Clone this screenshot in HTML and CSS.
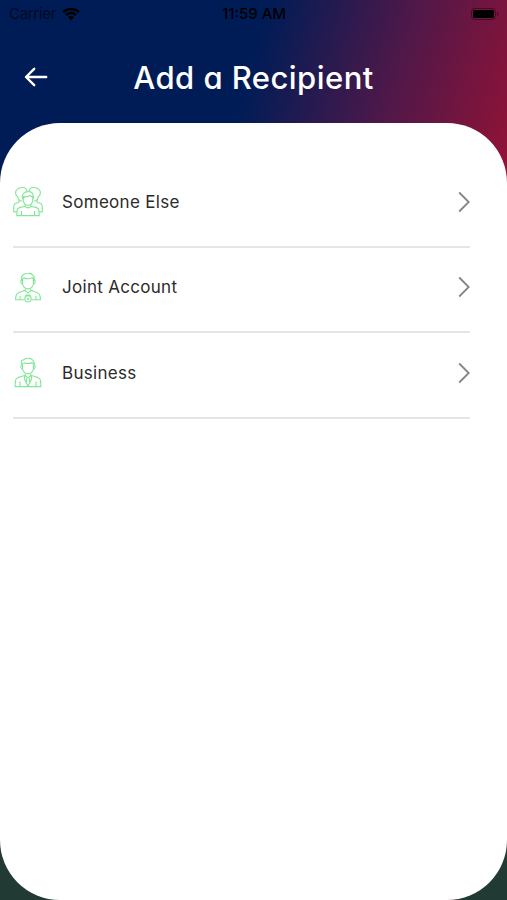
FILE: index.html
```html
<!DOCTYPE html>
<html lang="en">
<head>
  <meta charset="UTF-8">
  <meta name="viewport" content="width=device-width, initial-scale=1">
  <title>Add a Recipient</title>
  <link rel="stylesheet" href="styles.css">
</head>
<body>

<div class="screen">

  <!-- Status bar -->
  <div class="status-bar">
    <div class="status-left">
      <span class="carrier">Carrier</span>
      <svg class="wifi" viewBox="0 0 18 14" width="18" height="14">
        <path d="M1 5.2a11.5 11.5 0 0 1 16 0M3.9 8.1a7.4 7.4 0 0 1 10.2 0" fill="none" stroke="#000" stroke-width="2.5"/>
        <path d="M9 13.4L5.9 10.2a4.5 4.5 0 0 1 6.2 0z"/>
      </svg>
    </div>
    <div class="status-time">11:59 AM</div>
    <div class="status-right">
      <svg viewBox="0 0 28 12" width="28" height="12">
        <rect x=".5" y=".5" width="24" height="11" rx="3" fill="none" stroke="#000" stroke-opacity=".4"/>
        <rect x="2" y="2" width="21" height="8" rx="1.5"/>
        <path d="M26 4v4q1.5-.5 1.500-2T26 4z" fill-opacity=".4"/>
      </svg>
    </div>
  </div>

  <header class="header">
    <svg class="back" viewBox="0 0 24 20" width="24" height="20">
      <path d="M22.2 10H2M10.2 1.8L2 10l8.2 8.2" fill="none" stroke="#fff" stroke-width="2.4" stroke-linecap="round" stroke-linejoin="round"/>
    </svg>
    <h1>Add a Recipient</h1>
  </header>

  <main class="card">
    <ul class="list">
      <li class="item">
        <svg class="icon" viewBox="0 0 32 32">
          <path d="M10.500 13.500C9.500 12 9.500 9 11 7.500Q12.500 5.500 16 5.500Q20 5 21 8Q22.500 11 21.500 13.500"/>
          <path d="M10.500 10.500Q15 12 18 9.500Q19 11 21.500 11M11 11.500v4Q12 19.500 16 20Q20 19.500 21 15.500v-4"/>
          <path d="M13 19v2.500q3 2.500 6 0V19M13 21L6.800 22.500Q5 23 4.500 25L4 31h24L27.500 25Q27 23 25.200 22.500L19 21M9 26v5M23 26v5"/>
          <path d="M9.500 15.500Q6 15.500 5 11Q1.500 8 3.500 4Q5.500 1 10.500 1Q14 1 15 5M22.500 15.500Q26 15.500 27 11Q30.500 8 28.500 4Q26.500 1 21.500 1Q18 1 17 5"/>
          <path d="M6.500 14v2.500L2 18.500Q.8 19.500 .8 22v5h3.500M25.500 14v2.500l4.500 2Q31.200 19.500 31.200 22v5h-3.500"/>
        </svg>
        <span class="label">Someone Else</span>
        <svg class="chevron" viewBox="0 0 12 22" width="12" height="22"><path d="M1.200 1.500L10.700 11l-9.500 9.500"/></svg>
      </li>
      <li class="item">
        <svg class="icon" viewBox="0 0 32 32">
          <path d="M9.500 9Q8 5 10.500 3Q11.500 1 16 1Q20 .5 21 3Q23.500 4 22.500 9"/>
          <path d="M10 8Q10 5.500 12 6Q17 7.500 20.500 5.500Q22 5.500 22 8M10.200 8v4Q11 17 16 17.500Q21 17 21.800 12V8M10 8.500q-2-.2-1.600 1.600.4 2.500 2 2.500M22 8.500q2-.2 1.600 1.600-.4 2.500-2 2.500"/>
          <path d="M13 17v2.500l3 2.500 3-2.500V17M13 19L6 21.500Q3.500 22.500 3.200 25l-.5 4H12M19 19l7 2.500q2.500 1 2.800 3.500l.5 4H20M7.500 25v4M24.500 25v4"/>
          <circle cx="16" cy="28" r="3.400"/>
          <path d="M13 25.500l1.500-1.500h3l1.500 1.500M14.800 28l1 .9 1.500-1.500"/>
        </svg>
        <span class="label">Joint Account</span>
        <svg class="chevron" viewBox="0 0 12 22" width="12" height="22"><path d="M1.200 1.500L10.700 11l-9.500 9.500"/></svg>
      </li>
      <li class="item">
        <svg class="icon" viewBox="0 0 32 32">
          <path d="M10 9Q8 4 9.500 3Q12 3 13.500 1Q20 0 21 3Q23.500 4 22.200 9"/>
          <path d="M10 8Q10 5.500 12 6Q17 7 20 5.500Q22 5.500 22 8M10.200 8v4Q11 17 16 17.500Q21 17 21.800 12V8M10 8.500q-2-.2-1.600 1.600.4 2.500 2 2.500M22 8.500q2-.2 1.600 1.600-.4 2.500-2 2.500"/>
          <path d="M13 17v2.500l3 2 3-2V17M13 19L5 21.500Q2.800 22.500 2.600 25L2.200 31h27.600l-.4-6q-.2-2.500-2.400-3.500L19 19M7.500 25.500V31M24.500 25.500V31"/>
          <path d="M12.500 19.500l-.5 3 4 8.500 4-8.500-.5-3M14.800 21.500L14 28M17.200 21.500L18 28"/>
        </svg>
        <span class="label">Business</span>
        <svg class="chevron" viewBox="0 0 12 22" width="12" height="22"><path d="M1.200 1.500L10.700 11l-9.500 9.500"/></svg>
      </li>
    </ul>
  </main>

</div>

</body>
</html>
```
FILE: styles.css
```css
* {
  box-sizing: border-box;
}

body {
  margin: 0;
  font-family: Inter, "Liberation Sans", sans-serif;
}

.screen {
  height: 900px;
  display: flex;
  flex-direction: column;
  overflow: hidden;
  background: linear-gradient(106deg, #001c56 48%, #4f1849 74%, #951236 100%) no-repeat 0 0 / 100% 200px, #213a34;
}

.status-bar {
  height: 27px;
  padding: 0 8px 0 9px;
  display: grid;
  grid-template-columns: 1fr auto 1fr;
  align-items: center;
  font-size: 15px;
  color: #000;
}

.status-left {
  display: flex;
  align-items: center;
  gap: 6px;
}

.carrier {
  letter-spacing: -.3px;
  opacity: .65;
}

.status-time {
  font-weight: 500;
}

.status-right {
  display: flex;
  justify-content: flex-end;
}

.header {
  height: 96px;
  padding: 0 24px;
  display: grid;
  grid-template-columns: 24px 1fr 24px;
  align-items: center;
}

.header h1 {
  margin: 4px 0 0;
  font-size: 31px;
  font-weight: 500;
  font-feature-settings: "cv11";
  letter-spacing: .45px;
  text-align: center;
  white-space: nowrap;
  color: #fff;
}

.back {
  margin-top: 4px;
}

.card {
  flex: 1;
  padding: 39px 37px 0 13px;
  border-radius: 60px;
  background: #fff;
}

.list {
  margin: 0;
  padding: 0;
  list-style: none;
}

.item {
  height: 85.6px;
  padding-bottom: 4px;
  display: flex;
  align-items: center;
  border-bottom: 2px solid #e5e5e5;
}

.icon {
  width: 30px;
  height: 31px;
  fill: none;
  stroke: #83e698;
  stroke-width: 1.2;
  stroke-linejoin: round;
}

.label {
  flex: 1;
  padding-left: 19px;
  font-size: 17px;
  font-feature-settings: "cv11";
  letter-spacing: .3px;
  color: #2b2b2b;
}

.chevron {
  fill: none;
  stroke: #858585;
  stroke-width: 1.8;
}
```
